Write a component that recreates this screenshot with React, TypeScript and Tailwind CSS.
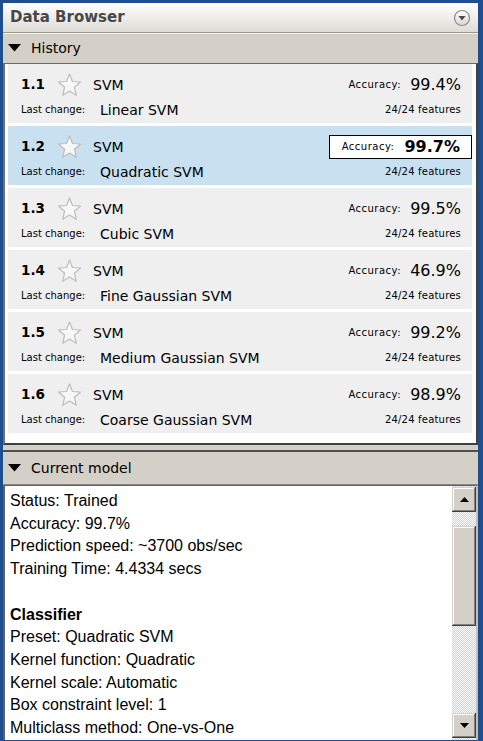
import React from "react";

type Item = { id: string; last: string; acc: string; selected?: boolean };

const items: Item[] = [
  { id: "1.1", last: "Linear SVM", acc: "99.4%" },
  { id: "1.2", last: "Quadratic SVM", acc: "99.7%", selected: true },
  { id: "1.3", last: "Cubic SVM", acc: "99.5%" },
  { id: "1.4", last: "Fine Gaussian SVM", acc: "46.9%" },
  { id: "1.5", last: "Medium Gaussian SVM", acc: "99.2%" },
  { id: "1.6", last: "Coarse Gaussian SVM", acc: "98.9%" },
];

const Star = () => (
  <svg width="25" height="24" viewBox="0 0 25 24" className="shrink-0">
    <polygon
      points="12.5,1 15.5,8.5 23.5,9 17.4,14.2 19.3,22.3 12.5,18 5.7,22.3 7.6,14.2 1.5,9 9.5,8.5"
      fill="#f7f7f7"
      stroke="#bdbdbd"
      strokeWidth="1.2"
      strokeLinejoin="round"
    />
  </svg>
);

const Tri = () => (
  <svg width="13" height="8" viewBox="0 0 13 8" className="shrink-0">
    <polygon points="0,0 13,0 6.5,7.5" fill="#000" />
  </svg>
);

const ScrollBtn = ({ up }: { up?: boolean }) => (
  <div className="h-[25px] w-full bg-[#d4d0c8] shadow-[inset_-1px_-1px_#404040,inset_1px_1px_#d4d0c8,inset_-2px_-2px_#808080,inset_2px_2px_#ffffff] flex items-center justify-center">
    <svg width="9" height="5" viewBox="0 0 9 5">
      {up ? (
        <polygon points="0,5 9,5 4.5,0" fill="#000" />
      ) : (
        <polygon points="0,0 9,0 4.5,5" fill="#000" />
      )}
    </svg>
  </div>
);

export default function App() {
  const sans = { fontFamily: '"DejaVu Sans", Verdana, sans-serif' };
  return (
    <div className="w-[483px] h-[741px] bg-[#1e4e8e] pt-[3px] pl-[3px] pr-[5px] pb-[4px] flex flex-col overflow-hidden">
      <div className="flex-1 flex flex-col bg-[#d4d0c8]" style={sans}>
        {/* Title bar */}
        <div className="h-[29px] shrink-0 bg-linear-to-b from-[#ffffff] to-[#dedcd6] flex items-center justify-between pl-[7px] pr-[7px]">
          <span className="text-[15px] font-bold text-[#484848] leading-none">Data Browser</span>
          <svg width="18" height="18" viewBox="0 0 18 18">
            <defs>
              <linearGradient id="g" x1="0" y1="0" x2="0" y2="1">
                <stop offset="0" stopColor="#ffffff" />
                <stop offset="1" stopColor="#d8d6d0" />
              </linearGradient>
            </defs>
            <circle cx="9" cy="9" r="7.5" fill="url(#g)" stroke="#8a8a8a" strokeWidth="1.2" />
            <polygon points="5.5,7 12.5,7 9,11.5" fill="#4a4a4a" />
          </svg>
        </div>

        {/* History header */}
        <div className="h-[31px] shrink-0 border-t border-[#9a978f] shadow-[inset_0_1px_#f4f3f0] flex items-center pl-[5px] gap-[10px]">
          <Tri />
          <span className="text-[14px] text-black leading-none">History</span>
        </div>

        {/* List */}
        <div className="h-[382px] shrink-0 bg-white border-t border-l-2 border-r-2 border-b-2 border-t-[#6b6b6b] border-l-[#707070] border-r-[#404040] border-b-[#404040] pl-[3px] pr-[4px] flex flex-col gap-[3px]">
          {items.map((it) => (
            <div
              key={it.id}
              className={`h-[59px] shrink-0 pt-[10px] pl-[13px] pr-[11px] ${it.selected ? "bg-[#c9e0f0]" : "bg-[#efefef]"}`}
            >
              <div className="h-[22px] flex items-center text-black">
                <span className="w-[36px] text-[13.5px] font-bold leading-none">{it.id}</span>
                <Star />
                <span className="ml-[11px] text-[14px] leading-none">SVM</span>
                <div className="flex-1" />
                {it.selected ? (
                  <div className="h-[24px] -mr-[11px] pr-[11px] pl-[12px] bg-white border border-black flex items-center">
                    <span className="text-[10px] tracking-[0.5px] leading-none">Accuracy:</span>
                    <span className="ml-[10px] text-[16px] font-bold leading-none">{it.acc}</span>
                  </div>
                ) : (
                  <>
                    <span className="text-[10px] tracking-[0.5px] leading-none">Accuracy:</span>
                    <span className="ml-[9px] text-[16px] leading-none">{it.acc}</span>
                  </>
                )}
              </div>
              <div className="h-[22px] mt-[3px] flex items-center text-black">
                <span className="w-[79px] text-[10px] leading-none">Last change:</span>
                <span className="text-[14px] leading-none">{it.last}</span>
                <div className="flex-1" />
                <span className="text-[10px] tracking-[0.2px] leading-none">24/24 features</span>
              </div>
            </div>
          ))}
        </div>

        <div className="h-[5px] shrink-0" />

        {/* Current model header */}
        <div className="h-[35px] shrink-0 border-t-2 border-[#505050] border-b border-b-[#8a8780] flex items-center pl-[5px] gap-[10px]">
          <Tri />
          <span className="text-[14px] text-black leading-none">Current model</span>
        </div>

        {/* Text area */}
        <div className="flex-1 min-h-0 flex bg-white border-l-2 border-l-[#606060] border-t border-t-[#606060] border-r-2 border-r-[#c0c0c0]">
          <div
            className="flex-1 pl-[5px] pt-[4px] text-[16px] leading-[22.7px] text-black overflow-hidden"
            style={{ fontFamily: '"Liberation Sans", Arial, sans-serif' }}
          >
            <div>Status: Trained</div>
            <div>Accuracy: 99.7%</div>
            <div>Prediction speed: ~3700 obs/sec</div>
            <div>Training Time: 4.4334 secs</div>
            <div>&nbsp;</div>
            <div className="font-bold">Classifier</div>
            <div>Preset: Quadratic SVM</div>
            <div>Kernel function: Quadratic</div>
            <div>Kernel scale: Automatic</div>
            <div>Box constraint level: 1</div>
            <div>Multiclass method: One-vs-One</div>
          </div>
          <div className="w-[24px] shrink-0 flex flex-col pt-[1px] pb-[2px] bg-[image:repeating-conic-gradient(#d4d0c8_0%_25%,#ffffff_0%_50%)] bg-[length:2px_2px]">
            <ScrollBtn up />
            <div className="h-[14px] shrink-0" />
            <div className="h-[100px] shrink-0 bg-[#d4d0c8] shadow-[inset_-1px_-1px_#404040,inset_1px_1px_#d4d0c8,inset_-2px_-2px_#808080,inset_2px_2px_#ffffff]" />
            <div className="flex-1" />
            <ScrollBtn />
          </div>
        </div>
      </div>
    </div>
  );
}
